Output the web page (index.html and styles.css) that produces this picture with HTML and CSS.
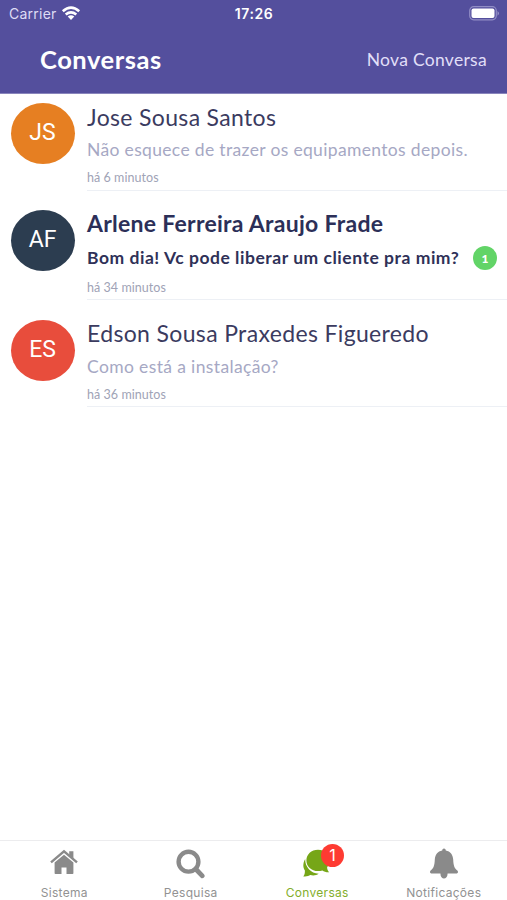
FILE: index.html
```html
<!DOCTYPE html>
<html lang="pt-BR">
<head>
<meta charset="utf-8">
<title>Conversas</title>
<link rel="stylesheet" href="styles.css">
</head>
<body>
<div class="app">
  <header class="header">
    <div class="status">
      <div class="carrier"><span>Carrier</span>
        <svg width="20" height="15" viewBox="0 0 20 15"><path d="M1.8 5.3Q10-1.9 18.2 5.3M4.7 8.5Q10 4.2 15.3 8.5" fill="none" stroke="#fff" stroke-width="2.6"/><path d="M6.7 10.4Q10 7.9 13.3 10.4L10 14Z" fill="#fff"/></svg>
      </div>
      <div class="clock">17:26</div>
      <svg class="battery" width="31" height="15" viewBox="0 0 31 15"><rect x=".7" y=".7" width="26.6" height="13.1" rx="4" fill="none" stroke="#918dc5" stroke-width="1.2"/><rect x="2.5" y="2.5" width="23" height="9.5" rx="2" fill="#fff"/><path d="M28.6 5Q31 7.3 28.6 9.7Z" fill="#a8a4d2"/></svg>
    </div>
    <div class="nav">
      <h1 class="title">Conversas</h1>
      <a class="action">Nova Conversa</a>
    </div>
  </header>
  <main class="list">
    <article class="chat first">
      <div class="avatar orange">JS</div>
      <div class="body">
        <h2 class="name"><span class="n1">Jose Sousa Santos</span></h2>
        <p class="message"><span class="m1">Não esquece de trazer os equipamentos depois.</span></p>
        <time class="time">há 6 minutos</time>
      </div>
    </article>
    <article class="chat unread">
      <div class="avatar navy">AF</div>
      <div class="body">
        <h2 class="name"><span class="n2">Arlene Ferreira Araujo Frade</span></h2>
        <p class="message"><span class="m2">Bom dia! Vc pode liberar um cliente pra mim?</span><b class="count">1</b></p>
        <time class="time">há 34 minutos</time>
      </div>
    </article>
    <article class="chat">
      <div class="avatar red">ES</div>
      <div class="body">
        <h2 class="name"><span class="n3">Edson Sousa Praxedes Figueredo</span></h2>
        <p class="message"><span class="m3">Como está a instalação?</span></p>
        <time class="time">há 36 minutos</time>
      </div>
    </article>
  </main>
  <nav class="tabs">
    <a class="tab">
      <svg width="28" height="44" viewBox="0 0 28 44"><path d="M1 21.4 14 10.4 27 21.4" fill="none" stroke="#8a8a8a" stroke-width="2.4"/><path d="M19.2 10.2h4.2v7.6l-4.2-3.5ZM4.6 21.6 14 13.8l9.4 7.8v10.6q0 .8-.8.8h-6.1v-6.6h-5V33H5.4q-.8 0-.8-.8Z" fill="#8a8a8a"/></svg>
      <span>Sistema</span>
    </a>
    <a class="tab">
      <svg width="30" height="44" viewBox="0 0 30 44"><circle cx="12.5" cy="20.7" r="9.9" fill="none" stroke="#8a8a8a" stroke-width="4.4"/><path d="m19.7 28 6.6 6.8" stroke="#8a8a8a" stroke-width="4.8" stroke-linecap="round"/></svg>
      <span>Pesquisa</span>
    </a>
    <a class="tab active">
      <svg width="30" height="44" viewBox="0 0 30 44"><path d="M3.2 18C.8 22 .8 26.6 2.9 29.4 3 32 2.5 34 1.3 35.4c3.2.3 5.5-.3 7-1.3 3.1.8 6.2.3 8.4-1.3C8.9 32.4 3 26 3.2 18Z" fill="#76a617"/><path d="M16 8.8c6.8 0 11.6 4.7 11.6 10.7 0 2.8-1 5-2.5 6.8.1 2.3.7 3.6 2.1 4.9-2.8.2-5.2-.7-6.8-1.8-1.3.5-2.8.7-4.4.7-6.7 0-11.6-4.6-11.6-10.6S9.3 8.8 16 8.8Z" fill="#76a617"/></svg>
      <b class="badge">1</b>
      <span>Conversas</span>
    </a>
    <a class="tab">
      <svg width="30" height="44" viewBox="0 0 30 44"><path d="M13.2 9.4q0-1.9 1.8-1.9t1.8 1.9c4.6.8 7.1 4.3 7.4 9.1.3 6.2 1.1 8.7 4.4 11.3q1.2 1.9-.8 2.6h-9.2c0 6.7-7.2 6.7-7.2 0H2.2q-2-.7-.8-2.6c3.3-2.6 4.1-5.1 4.4-11.3.3-4.8 2.8-8.3 7.4-9.1Z" fill="#8a8a8a"/></svg>
      <span>Notificações</span>
    </a>
  </nav>
</div>
</body>
</html>
```
FILE: styles.css
```css
* { box-sizing: border-box; }
body, h1, h2, p { margin: 0; }
body { background: #fff; font-family: Lato, sans-serif; }
.app { height: 900px; display: flex; flex-direction: column; overflow: hidden; }
svg { display: block; }

.header { height: 94px; background: #544f9d; color: #fff; border-bottom: 1px solid #8985bc; }
.status { height: 28px; padding: 0 7px 0 9px; display: grid; grid-template-columns: 1fr auto 1fr; align-items: center; font-family: Inter, sans-serif; font-size: 14px; line-height: 28px; }
.carrier { display: flex; align-items: center; gap: 4px; color: #dedcf5; letter-spacing: .25px; }
.carrier svg { margin-top: -2px; }
.clock { font-weight: 600; letter-spacing: .6px; margin-right: 1px; }
.battery { justify-self: end; margin-top: -1px; }
.nav { height: 62px; padding: 0 20px 0 40px; display: flex; align-items: center; justify-content: space-between; }
.title { font-size: 25.5px; font-weight: 700; letter-spacing: .55px; }
.action { font-size: 17.5px; letter-spacing: .3px; color: #e1dff8; }

.list { flex: 1; }
.chat { display: flex; gap: 12px; padding: 19px 0 0 11px; }
.chat.first { padding-top: 9px; }
.chat.unread { padding-top: 18px; }
.avatar { width: 64px; height: 61px; margin-left: -.5px; margin-right: .5px; border-radius: 50%; color: #fff; font: 23px/60px Roboto, sans-serif; text-align: center; flex: none; }
.unread .avatar, .chat:last-child .avatar { margin-top: 1px; }
.orange { background: #e67f22; }
.navy { background: #2c3d50; }
.red { background: #e84d3c; }
.body { flex: 1; min-width: 0; height: 88px; border-bottom: 1px solid #edf0f5; display: flex; flex-direction: column; }
.unread .body { height: 91px; }
.name { font-size: 23px; font-weight: 400; line-height: 28px; color: #3b3b5f; white-space: nowrap; }
.message { height: 39px; display: flex; align-items: center; justify-content: space-between; padding-right: 10px; font-size: 17.5px; color: #a6a8c4; white-space: nowrap; }
.first .message { height: 38px; padding-bottom: 1px; }
.unread .message { height: 42px; padding-bottom: 1px; color: #2f3158; font-weight: 700; }
.unread .name { color: #2c2f58; font-weight: 700; }
.time { font-size: 12.5px; line-height: 17px; letter-spacing: .05px; color: #a0a3b6; }
.count { width: 24px; height: 24px; border-radius: 50%; background: #62d467; color: #fff; font-size: 12px; line-height: 25px; text-align: center; }
.n1 { letter-spacing: .34px; }
.n2 { letter-spacing: .27px; }
.n3 { letter-spacing: .35px; }
.m1 { letter-spacing: .34px; }
.m2 { letter-spacing: .53px; }
.m3 { letter-spacing: .37px; }

.tabs { height: 60px; border-top: 1px solid #ececee; display: grid; grid-template-columns: repeat(4, 1fr); padding-left: 1px; }
.tab { position: relative; display: flex; flex-direction: column; align-items: center; font: 12px/16px Inter, sans-serif; letter-spacing: .3px; color: #929292; }
.active { color: #83ae2c; }
.badge { position: absolute; left: 67px; top: 3px; width: 23px; height: 23px; border-radius: 50%; background: #fe3b32; color: #fff; font: 16px/23px Inter, sans-serif; text-align: center; letter-spacing: 0; }
```
